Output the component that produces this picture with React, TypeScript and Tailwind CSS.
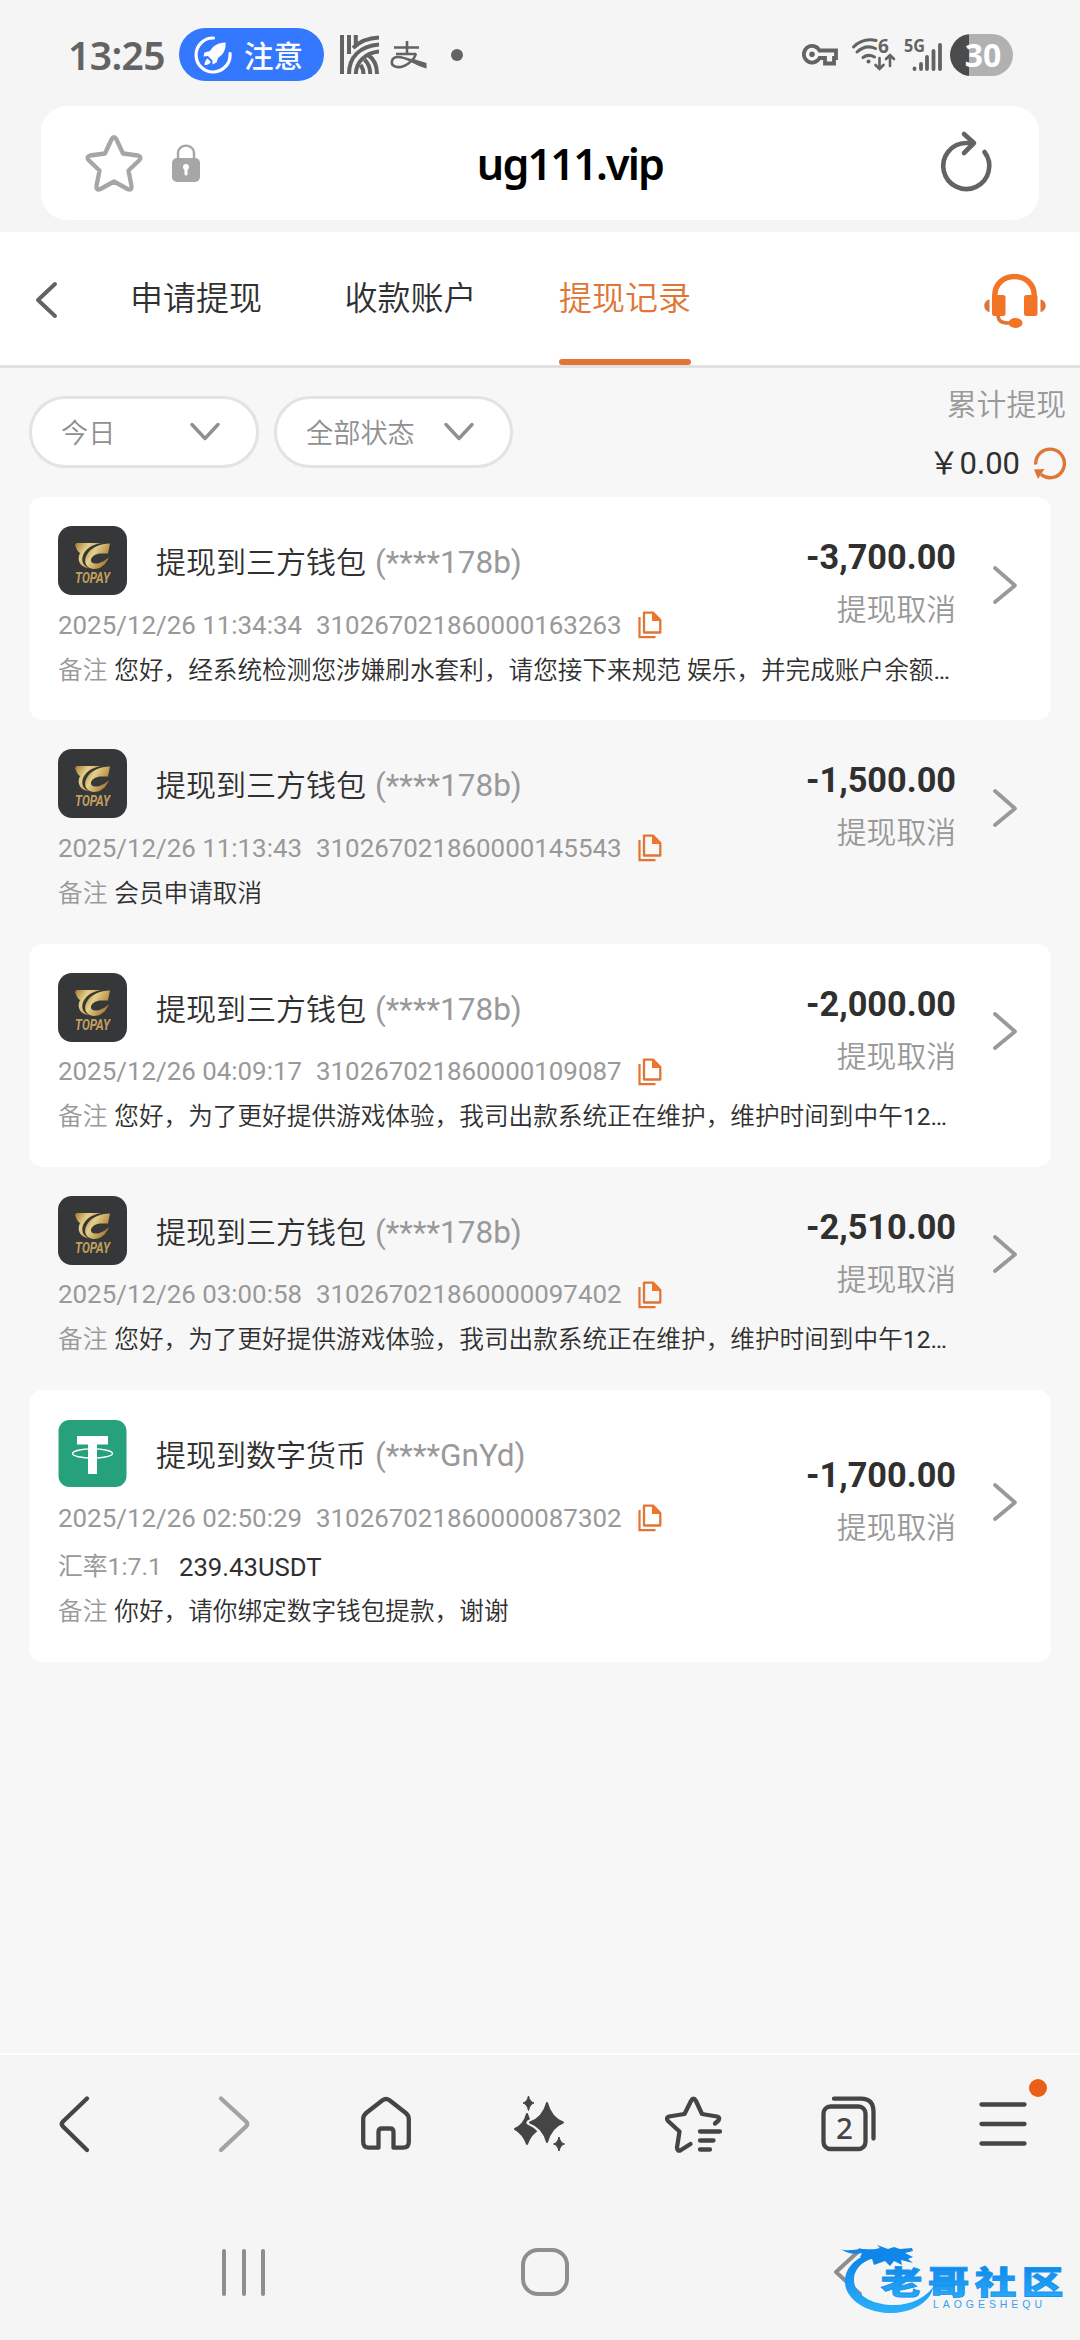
import type { ReactNode } from "react";

type RecordItem = {
  kind: "topay" | "usdt";
  title: string;
  account: string;
  time: string;
  orderNo: string;
  note: string;
  noteTail?: string;
  amount: string;
  status: string;
  rate?: string;
  received?: string;
};

const RECORDS: RecordItem[] = [
  {
    kind: "topay",
    title: "提现到三方钱包",
    account: "(****178b)",
    time: "2025/12/26 11:34:34",
    orderNo: "310267021860000163263",
    note: "您好，经系统检测您涉嫌刷水套利，请您接下来规范 娱乐，并完成账户余额",
    noteTail: "…",
    amount: "-3,700.00",
    status: "提现取消",
  },
  {
    kind: "topay",
    title: "提现到三方钱包",
    account: "(****178b)",
    time: "2025/12/26 11:13:43",
    orderNo: "310267021860000145543",
    note: "会员申请取消",
    amount: "-1,500.00",
    status: "提现取消",
  },
  {
    kind: "topay",
    title: "提现到三方钱包",
    account: "(****178b)",
    time: "2025/12/26 04:09:17",
    orderNo: "310267021860000109087",
    note: "您好，为了更好提供游戏体验，我司出款系统正在维护，维护时间到中午",
    noteTail: "12…",
    amount: "-2,000.00",
    status: "提现取消",
  },
  {
    kind: "topay",
    title: "提现到三方钱包",
    account: "(****178b)",
    time: "2025/12/26 03:00:58",
    orderNo: "310267021860000097402",
    note: "您好，为了更好提供游戏体验，我司出款系统正在维护，维护时间到中午",
    noteTail: "12…",
    amount: "-2,510.00",
    status: "提现取消",
  },
  {
    kind: "usdt",
    title: "提现到数字货币",
    account: "(****GnYd)",
    time: "2025/12/26 02:50:29",
    orderNo: "310267021860000087302",
    note: "你好，请你绑定数字钱包提款，谢谢",
    amount: "-1,700.00",
    status: "提现取消",
    rate: "汇率1:7.1",
    received: "239.43USDT",
  },
];

function StatusBar() {
  return (
    <div className="flex h-[106px] items-center pl-[68px] pr-[67px] pt-[3px] text-[#636363]">
      <span className="w-[111px] whitespace-nowrap font-['Noto_Sans'] text-[39px] font-semibold leading-none tracking-[-0.6px]">
        13:25
      </span>
      <div className="flex h-[53px] w-[145px] items-center rounded-full bg-[#3478ff] pl-[15px] text-white">
        <svg width="38" height="38" viewBox="0 0 38 38" fill="none">
          <path d="M19.5 2A17 17 0 1 0 36 17.5" stroke="currentColor" strokeWidth="3.2" strokeLinecap="round" />
          <path
            d="M31.5 6.5C24 6.5 19 10 16 15L10.500 16.500L9.500 20.500L14 20L18.500 24.500L18.500 28.500L22.500 26.500L24 22C29.500 18.500 32 13.500 31.500 6.500Z"
            fill="currentColor"
          />
          <path d="M13.500 22.500L17 26C15 28.500 13 29 10.500 29C10.500 26.500 11.500 24 13.500 22.500Z" fill="currentColor" />
        </svg>
        <span className="ml-[12px] font-['Noto_Sans_CJK_SC'] text-[29.500px] font-medium leading-none">注意</span>
      </div>
      <svg className="ml-[16px]" width="39" height="39" viewBox="0 0 39 39" fill="none" stroke="currentColor" strokeWidth="4">
        <path d="M2 0V39M9 0V19M15.800 0V10" />
        <path d="M39 2.500C28 3 19 7 13 13" />
        <path d="M39 9.500C20 11 9 22 9 39" />
        <path d="M39 16.500C25 18 16 27 15.800 39" />
        <path d="M37 39C37 30 34 24 28 20M30.300 39C30.300 32 28 28 24.500 24.500M23.500 39C23.500 35 22 32 20.500 30" />
      </svg>
      <svg className="ml-[11px]" width="37" height="28" viewBox="0 0 37 28" fill="none" stroke="currentColor">
        <path d="M4 6.500H29M17 0V13M6 13H26" strokeWidth="2.600" />
        <path d="M26 12.500C24 20 14 27 7 26C-1 24.500 1 16 8 16C13 16 20 19 25 21" strokeWidth="2.600" />
        <path d="M22 17.500L36.500 22V27.500C31 26 26 24 20 20.500Z" fill="currentColor" stroke="none" />
      </svg>
      <span className="ml-[24px] size-[12px] rounded-full bg-current" />

      <div className="ml-auto flex items-center">
        <svg width="36" height="22" viewBox="0 0 36 22" fill="none" stroke="currentColor" strokeWidth="3.800">
          <path d="M17.500 6.500H34V14H32V19.500H23V14H17.500A8.300 8.300 0 1 1 17.500 6.500Z" />
          <circle cx="10" cy="10.200" r="2.800" fill="currentColor" stroke="none" />
        </svg>
        <svg
          className="ml-[14px] overflow-visible"
          width="44"
          height="36"
          viewBox="0 0 44 36"
          fill="none"
          stroke="currentColor"
          strokeWidth="3"
          strokeLinecap="round"
        >
          <path d="M1.500 10C8 3.500 15 1.500 24 3.500M5 15C11 9.500 17 8.500 23.500 11.500M11 20.500C15 17.500 18 17.500 22.500 20" />
          <circle cx="16.500" cy="24.500" r="2" fill="currentColor" stroke="none" />
          <path d="M27.500 21V31M23.500 28L27.500 32L31.500 28M38 29V19M34 22L38 18L42 22" strokeWidth="2.600" />
          <text x="26" y="16" fill="currentColor" stroke="none" className="font-['Noto_Sans'] text-[19px] font-bold">
            6
          </text>
        </svg>
        <svg
          className="ml-[8px] overflow-visible"
          width="38"
          height="34"
          viewBox="0 0 38 34"
          stroke="currentColor"
          strokeWidth="3.800"
          strokeLinecap="round"
        >
          <path d="M10.500 30.500V31M17 26V31M23 19V31M29.500 13V31M36 7V31" />
          <text
            x="0"
            y="13.500"
            textLength="21"
            lengthAdjust="spacingAndGlyphs"
            fill="currentColor"
            stroke="none"
            className="font-['Noto_Sans'] text-[17.500px] font-bold"
          >
            5G
          </text>
        </svg>
        <div className="ml-[8px] flex h-[42px] w-[63px] items-center justify-center rounded-full bg-linear-to-r from-[#4b4b4b] from-30% to-[#b1b1b1] to-30% pl-[3px] font-['Noto_Sans'] text-[32px] font-bold leading-none text-white">
          30
        </div>
      </div>
    </div>
  );
}

function AddressBar() {
  return (
    <div className="mx-[41px] flex h-[114px] items-center rounded-[26px] bg-white">
      <svg className="ml-[43px] text-[#a6a6a6]" width="60" height="60" viewBox="0 0 60 60" fill="none">
        <path
          d="M27.500 6.500Q30 2 32.500 6.500L39 20.500L54 22.500Q58 23.500 55.500 27L44.500 37.500L47.500 53Q48 58 43.500 56L30 48.500L16.500 56Q12 58 12.500 53L15.500 37.500L4.500 27Q2 23.500 6 22.500L21 20.500Z"
          stroke="currentColor"
          strokeWidth="4.300"
          strokeLinejoin="round"
        />
      </svg>
      <svg className="ml-[28px] text-[#a6a6a6]" width="28" height="38" viewBox="0 0 28 38" fill="none">
        <path d="M6 16V9.500C6 -1 22 -1 22 9.500V16" stroke="currentColor" strokeWidth="2.400" />
        <rect y="14" width="28" height="24" rx="5" fill="currentColor" />
        <circle cx="14" cy="23" r="3" fill="#fff" />
        <path d="M14 24V30" stroke="#fff" strokeWidth="3" strokeLinecap="round" />
      </svg>
      <div className="flex-1 pl-[4px] pt-px text-center font-['Noto_Sans'] text-[43px] font-semibold leading-none tracking-[-1.800px] text-black">
        ug111.vip
      </div>
      <svg className="mr-[43px] text-[#636363]" width="60" height="72" viewBox="0 0 60 72" fill="none">
        <path
          d="M37 16H30A23 23 0 1 0 48.500 25M28 7L38 16L28 26"
          stroke="currentColor"
          strokeWidth="4.600"
          strokeLinecap="round"
          strokeLinejoin="round"
        />
      </svg>
    </div>
  );
}

function PageHeader() {
  return (
    <header className="mt-[12px] flex h-[136px] items-stretch border-b-[3px] border-[#e1e1e1] bg-white text-[33px]">
      <svg className="ml-[34px] mt-[49px] text-[#636363]" width="24" height="38" viewBox="0 0 24 38" fill="none">
        <path d="M21 3L4 19L21 35" stroke="currentColor" strokeWidth="4" strokeLinecap="round" strokeLinejoin="round" />
      </svg>
      <nav className="ml-[72px] flex gap-[82.500px] font-[350] text-[#303030]">
        <span className="pt-[42px] leading-[50px]">申请提现</span>
        <span className="pt-[42px] leading-[50px]">收款账户</span>
        <span className="flex flex-col justify-between pt-[42px] leading-[50px] text-[#e07535]">
          提现记录
          <i className="h-[6px] rounded-full bg-[#e07535]" />
        </span>
      </nav>
      <svg className="ml-auto mr-[34px] mt-[42px] text-[#f27425]" width="62" height="56" viewBox="0 0 62 56" fill="none">
        <path d="M10.700 36V22C10.700 -4 50.300 -4 50.300 22V36" stroke="currentColor" strokeWidth="5.400" />
        <rect x="8" y="21" width="13.500" height="21" rx="2.500" fill="currentColor" />
        <rect x="40" y="21" width="13.500" height="21" rx="2.500" fill="currentColor" />
        <path d="M5.500 25.500V38C-1.500 37 -1.500 26.500 5.500 25.500ZM56.500 25.500V38C63.500 37 63.500 26.500 56.500 25.500Z" fill="#e07535" />
        <path d="M14 41C14 46.500 17 49.500 26 49" stroke="#e07535" strokeWidth="3.600" />
        <ellipse cx="31.500" cy="49" rx="7" ry="5" fill="currentColor" />
      </svg>
    </header>
  );
}

function Filter({ label, className }: { label: string; className: string }) {
  return (
    <div
      className={`flex h-[72px] items-center justify-between rounded-full border-[3px] border-[#e3e3e3] bg-white pl-[29px] text-[27.200px] font-[350] leading-none text-[#909090] ${className}`}
    >
      <span className="pt-[5px]">{label}</span>
      <svg width="30" height="20" viewBox="0 0 30 20" fill="none">
        <path d="M2 2.500L15 16.500L28 2.500" stroke="currentColor" strokeWidth="3.400" strokeLinecap="round" strokeLinejoin="round" />
      </svg>
    </div>
  );
}

function FilterBar() {
  return (
    <div className="flex h-[129px] pl-[29px] pr-[14px]">
      <Filter label="今日" className="mt-[28px] w-[230px] pr-[36px]" />
      <Filter label="全部状态" className="ml-[15px] mt-[28px] w-[239px] pr-[36px]" />
      <div className="ml-auto flex flex-col items-end pt-[12px]">
        <span className="text-[29.800px] font-[350] leading-[50px] text-[#999]">累计提现</span>
        <div className="mt-[13px] flex items-center text-[31px] leading-[40px] text-[#303030]">
          <span className="pt-px">￥0.00</span>
          <svg className="ml-[14px]" width="32" height="34" viewBox="0 0 32 34" fill="none">
            <path d="M1.800 17.500A14.300 14.300 0 1 1 7 27.500" stroke="#e07535" strokeWidth="3.400" />
            <path d="M0 22.500L10.500 22L4 32Z" fill="#e07535" />
          </svg>
        </div>
      </div>
    </div>
  );
}

function TopayLogo() {
  return (
    <svg className="shrink-0" width="69" height="69" viewBox="0 0 69 69">
      <defs>
        <linearGradient id="gold" x1="0" x2="1" y1="0" y2="0.600">
          <stop offset="0" stopColor="#a3782f" />
          <stop offset="0.400" stopColor="#e6d08a" />
          <stop offset="1" stopColor="#a5752b" />
        </linearGradient>
      </defs>
      <rect width="69" height="69" rx="14" fill="#353738" />
      <path d="M18.500 17H44C34 18 26 24 24.500 31C23.500 36 26 40 31 42.500C23 41 19.500 36 21 29.500L22 27H22C20 26 19 24 17 19Z" fill="url(#gold)" />
      <path
        d="M52 17.500L50 27.500H42C35 28.500 31.500 33 33.500 36C37 39.500 45 37 51 31C48 39 42 43.500 35 43C27.500 42 25 35 29 28.500C33 21.500 42 17.500 52 17.500Z"
        fill="url(#gold)"
      />
      <text
        x="17"
        y="57"
        textLength="35"
        lengthAdjust="spacingAndGlyphs"
        fill="#c0a060"
        className="font-['Roboto'] text-[14.500px] font-bold italic"
      >
        TOPAY
      </text>
    </svg>
  );
}

function UsdtLogo() {
  return (
    <svg className="shrink-0" width="69" height="69" viewBox="0 0 69 69">
      <rect x="0.500" y="1" width="68" height="67" rx="11" fill="#26a17b" />
      <path d="M19 17H50V25.500H39V55H30V25.500H19Z" fill="#fff" />
      <ellipse cx="34.500" cy="34.500" rx="20" ry="4.600" fill="none" stroke="#fff" strokeWidth="1.300" />
    </svg>
  );
}

function CopyIcon() {
  return (
    <svg width="24" height="28" viewBox="0 0 24 28" fill="none" stroke="#e07535">
      <path d="M1.500 6V26.200H17.500" strokeWidth="2.200" />
      <path d="M6 1.600H15L22.300 9V21.500H6Z" strokeWidth="2.300" strokeLinejoin="round" />
      <path d="M14 1.500V10H22.500Z" fill="#f27425" stroke="none" />
    </svg>
  );
}

function RecordCard({ item, filled }: { item: RecordItem; filled: boolean }) {
  return (
    <article
      className={`grid rounded-[14px] ${item.rate ? "h-[272px]" : "h-[223.250px]"} ${filled ? "bg-white" : ""}`}
    >
      <div className="min-w-0 pl-[29px] pt-[29px] [grid-area:1/1]">
        <div className="flex items-center">
          {item.kind === "topay" ? <TopayLogo /> : <UsdtLogo />}
          <h2 className="ml-[29px] flex items-baseline gap-[9px] pt-[5px] text-[30px] leading-[44px] text-[#303030]">
            <span className="font-[350]">{item.title}</span>
            <span className="text-[31.500px] text-[#999]">{item.account}</span>
          </h2>
        </div>
        <div className="mt-[9px] flex h-[42px] items-center text-[25.900px] text-[#999]">
          <span className="w-[258px] whitespace-nowrap">{item.time}</span>
          <span className="w-[322px] whitespace-nowrap">{item.orderNo}</span>
          <CopyIcon />
        </div>
        {item.rate && (
          <div className="mt-[6px] flex h-[44px] items-center gap-[17px] text-[24.800px] text-[#999]">
            <span>{item.rate}</span>
            <span className="text-[25.700px] text-[#303030]">{item.received}</span>
          </div>
        )}
        <p
          className={`flex h-[44px] items-center whitespace-pre text-[24.650px] text-[#303030] ${item.rate ? "mt-px" : "mt-[3px]"}`}
        >
          <span className="mr-[7px] font-[350] text-[#999]">备注</span>
          <span className="font-[350]">{item.note}</span>
          {item.noteTail}
        </p>
      </div>
      <div className="flex items-center self-center justify-self-end pb-[48px] pr-[33px] [grid-area:1/1]">
        <div className="text-right">
          <div className="-mt-[2px] text-[34.300px] font-bold leading-[53px] text-[#303030]">{item.amount}</div>
          <div className="text-[29.800px] font-[350] leading-[52px] text-[#999]">{item.status}</div>
        </div>
        <svg className="ml-[36px]" width="26" height="40" viewBox="0 0 26 40" fill="none">
          <path d="M3 3L23 20.500L3 37" stroke="#999" strokeWidth="3.800" strokeLinecap="round" strokeLinejoin="round" />
        </svg>
      </div>
    </article>
  );
}

function ToolbarIcon({ children, className = "" }: { children: ReactNode; className?: string }) {
  return (
    <svg
      className={className}
      width="60"
      height="60"
      viewBox="0 0 60 60"
      fill="none"
      stroke="currentColor"
      strokeWidth="4.300"
      strokeLinecap="round"
      strokeLinejoin="round"
    >
      {children}
    </svg>
  );
}

function BrowserToolbar() {
  return (
    <div className="grid h-[138px] grid-cols-7 place-items-center text-[#454545]">
      <ToolbarIcon>
        <path d="M40 4.500L16 27.500Q13.500 30 16 32.500L40 56" />
      </ToolbarIcon>
      <ToolbarIcon className="text-[#a3a3a3]">
        <path d="M20 4.500L45 27.500Q47.500 30 45 32.500L20 56" />
      </ToolbarIcon>
      <ToolbarIcon>
        <path d="M22.500 53.700H13Q7.200 53.700 7.200 48V25Q7.200 21.500 10.200 19L26.500 6.300Q30 3.700 33.500 6.300L49.800 19Q52.800 21.500 52.800 25V48Q52.800 53.700 47 53.700H37.500V38Q37.500 34.500 34 34.500H26Q22.500 34.500 22.500 38Z" />
      </ToolbarIcon>
      <svg width="60" height="60" viewBox="0 0 60 60" fill="currentColor">
        <path d="M18.500 2Q20 8 24 9Q20 10 18.500 16.500Q17 10 13 9Q17 8 18.500 2Z" stroke="currentColor" strokeLinejoin="round" />
        <path
          d="M17 20Q20 31 29 35Q21 39 17 50Q13 39 5 35Q14 31 17 20Z"
          stroke="currentColor"
          strokeWidth="2"
          strokeLinejoin="round"
        />
        <path
          d="M37 9Q42 23 54 28.500Q42 34 37 49Q32 34 19 28.500Q32 23 37 9Z"
          stroke="#f5f5f5"
          strokeWidth="5"
          strokeLinejoin="round"
        />
        <path
          d="M37 9Q41 24 53 28.500Q41 33 37 48Q33 33 20 28.500Q33 24 37 9Z"
          stroke="currentColor"
          strokeWidth="2"
          strokeLinejoin="round"
        />
        <path d="M49 43Q50.500 49 54.500 50Q50.500 51 49 57Q47.500 51 43.500 50Q47.500 49 49 43Z" stroke="currentColor" strokeLinejoin="round" />
      </svg>
      <ToolbarIcon>
        <path d="M51 29.500L54.500 26.500Q56.500 23.500 53 22.500L38 20L32 7Q29.500 2.500 27 7L20.500 20L5 22.500Q1.500 23.500 4 27L15.500 37.500L13 53.500Q13 58 17 56L26.500 50" />
        <path d="M36 37.500H56M36 46.500H49.500M36 55.500H46" />
      </ToolbarIcon>
      <ToolbarIcon>
        <rect x="4.500" y="12.500" width="42" height="42.500" rx="7" />
        <path d="M15 4.700H42Q54.500 4.700 54.500 18V44.500" />
        <text
          x="25.500"
          y="44.500"
          textAnchor="middle"
          fill="currentColor"
          stroke="none"
          className="font-['Noto_Sans'] text-[29.500px] font-medium"
        >
          2
        </text>
      </ToolbarIcon>
      <div className="relative flex items-center">
        <ToolbarIcon>
          <path d="M8.500 10.500H51.500M8.500 30H51.500M8.500 49.500H51.500" />
        </ToolbarIcon>
        <span className="absolute -right-[14px] -top-[15px] size-[18px] rounded-full bg-[#ea5f17]" />
      </div>
    </div>
  );
}

function Watermark() {
  return (
    <svg className="absolute left-[838px] top-[47px]" width="232" height="80" viewBox="0 0 232 80">
      <defs>
        <linearGradient id="sea" x1="0" x2="0" y1="0" y2="1">
          <stop offset="0" stopColor="#0a7fe6" />
          <stop offset="1" stopColor="#2bb0fb" />
        </linearGradient>
      </defs>
      <path
        d="M46 10C22 13 6 26 7 43C8 60 30 74 55 73C78 72 94 59 95 47C88 57 74 65 56 65C33 65 16 54 16 40C16 28 26 19 42 17Z"
        fill="url(#sea)"
      />
      <path
        d="M3 9C10 12 17 9 24 9C32 9 36 10 42 8L39 5L50 9L56 7L62 9L74 8L75 11L67 13L75 17L70 19L75 23L63 20L64 25L56 21L52 26L47 21L36 25L34 19L22 17L24 13C16 15 8 13 3 9Z"
        fill="#0f86ea"
      />
      <g transform="scale(1.300 1)">
        <text
          x="32.800"
          y="54"
          fill="url(#sea)"
          stroke="#1793f0"
          strokeWidth="0.900"
          className="font-['Noto_Sans_CJK_SC'] text-[32px] font-black tracking-[4.200px]"
        >
          老哥社区
        </text>
      </g>
      <text x="95" y="68" textLength="109" fill="#3c9fea" className="font-['Liberation_Sans'] text-[10.500px]">
        LAOGESHEQU
      </text>
    </svg>
  );
}

function SystemNav() {
  return (
    <div className="relative h-[147px] text-[#8e8e8e]">
      <div className="flex items-center pl-[222px] pt-[54px]">
        <div className="flex w-[43px] justify-between">
          <i className="h-[47px] w-[4px] rounded-full bg-current" />
          <i className="h-[47px] w-[4px] rounded-full bg-current" />
          <i className="h-[47px] w-[4px] rounded-full bg-current" />
        </div>
        <i className="ml-[256px] h-[48px] w-[48px] rounded-[17px] border-4 border-current" />
        <svg className="ml-[263px]" width="32" height="50" viewBox="0 0 32 50" fill="none">
          <path d="M28 3L4 25L28 47" stroke="currentColor" strokeWidth="4" strokeLinecap="round" strokeLinejoin="round" />
        </svg>
      </div>
      <Watermark />
    </div>
  );
}

export default function App() {
  return (
    <div className="flex h-[2340px] w-[1080px] flex-col overflow-hidden bg-[#f5f5f5] font-['Roboto','Noto_Sans_CJK_SC',sans-serif]">
      <StatusBar />
      <AddressBar />
      <PageHeader />
      <main className="flex-1 bg-[#f7f7f7]">
        <FilterBar />
        <section className="mx-[29px]">
          {RECORDS.map((item, i) => (
            <RecordCard key={item.orderNo} item={item} filled={i % 2 === 0} />
          ))}
        </section>
      </main>
      <div className="border-t-2 border-white">
        <BrowserToolbar />
        <SystemNav />
      </div>
    </div>
  );
}
